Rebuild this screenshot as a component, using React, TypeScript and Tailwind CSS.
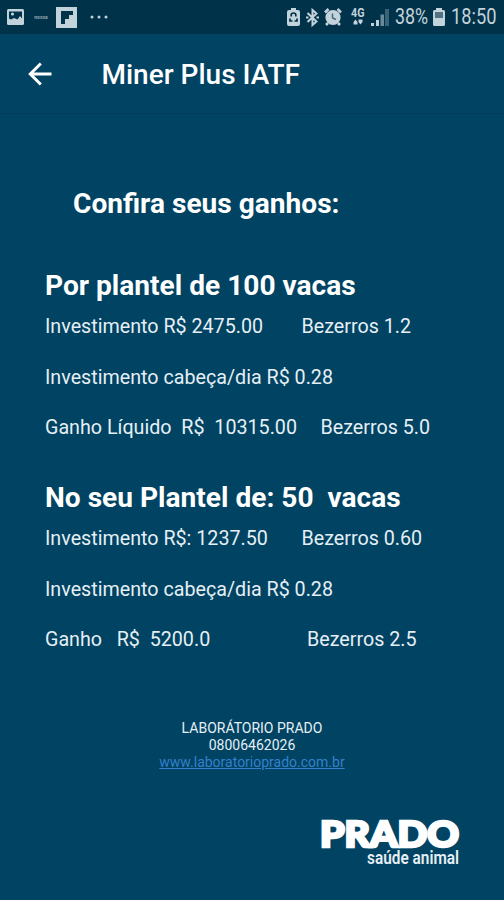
type Row = { left: string; right: string; offset: string };

const rows100: Row[] = [
  { left: "Investimento R$ 2475.00", right: "Bezerros 1.2", offset: "w-[256.5px]" },
  { left: "Investimento cabeça/dia R$ 0.28", right: "", offset: "w-[300px]" },
  { left: "Ganho Líquido  R$  10315.00", right: "Bezerros 5.0", offset: "w-[275.5px]" },
];

const rows50: Row[] = [
  { left: "Investimento R$: 1237.50", right: "Bezerros 0.60", offset: "w-[256.5px]" },
  { left: "Investimento cabeça/dia R$ 0.28", right: "", offset: "w-[300px]" },
  { left: "Ganho   R$  5200.0", right: "Bezerros 2.5", offset: "w-[262px]" },
];

const Rows = ({ rows }: { rows: Row[] }) => (
  <div className="flex flex-col gap-[26.5px] text-[19.7px] leading-6 text-[#e6eff5]">
    {rows.map((row, index) => (
      <div key={index} className="flex whitespace-pre">
        <span className={`shrink-0 ${row.offset}`}>{row.left}</span>
        <span>{row.right}</span>
      </div>
    ))}
  </div>
);

const StatusBar = () => (
  <div className="flex h-[34px] items-center justify-between bg-[#003249] text-[#c3d3db]">
    <div className="flex items-center pl-[7px]">
      <svg width="17" height="16" viewBox="0 0 17 16">
        <rect width="17" height="16" rx="1.5" fill="currentColor" />
        <path d="M2 2.5h13v7l-2-2.5-2.5 3.5-3.5-1.5-3 1.5-2-1z" fill="#003249" />
        <circle cx="5.5" cy="5" r="1.6" fill="currentColor" />
      </svg>
      <span className="ml-[9px] w-4 text-center text-[5px] font-bold leading-4 text-[#8fa5b0]">nossa</span>
      <svg className="ml-[7px]" width="21" height="21" viewBox="0 0 21 21">
        <rect width="21" height="21" fill="currentColor" />
        <path d="M5 4h12v4h-4v4H9v5H5z" fill="#003249" />
      </svg>
      <svg className="ml-[13px]" width="18" height="4" viewBox="0 0 18 4" fill="currentColor">
        <circle cx="2" cy="2" r="1.5" />
        <circle cx="9" cy="2" r="1.5" />
        <circle cx="16" cy="2" r="1.5" />
      </svg>
    </div>
    <div className="flex items-center">
      <svg width="13" height="18" viewBox="0 0 13 18">
        <path d="M4 0h5v2h2q2 0 2 2v12q0 2-2 2H2q-2 0-2-2V4q0-2 2-2h2z" fill="currentColor" />
        <path
          d="M4.2 8.5V7q0-2 2.3-2t2.3 2v1.5M3 10.5V13h2.5M10 10.5V13H7.5"
          fill="none"
          stroke="#003249"
          strokeWidth="1.7"
        />
      </svg>
      <svg className="ml-[6px]" width="13" height="19" viewBox="0 0 13 19" fill="none" stroke="currentColor" strokeWidth="2">
        <path d="M1.5 5 10.5 13.5 6.5 17V2l4 3.5L1.5 14" />
        <path d="M0 9.5h2.5M10.5 9.5H13" />
      </svg>
      <svg className="ml-[5px]" width="18" height="18" viewBox="0 0 18 18">
        <circle cx="9" cy="9.5" r="7.6" fill="currentColor" />
        <path d="M1 4.5 4.5 1M17 4.5 13.5 1M4 15l-2 2M14 15l2 2" stroke="currentColor" strokeWidth="2.6" />
        <path d="M8.5 5.5V10l3.5 1.5" fill="none" stroke="#47697a" strokeWidth="1.5" />
      </svg>
      <svg className="ml-[9px] overflow-visible" width="14" height="18" viewBox="0 0 14 18" fill="currentColor">
        <text x="0" y="9" fontSize="12" fontWeight="700" textLength="13.5" lengthAdjust="spacingAndGlyphs">
          4G
        </text>
        <path d="M2.5 14 4.5 11.5 6.5 14v2.5h-4zM7.5 14v-2.5h4V14l-2 2.5z" />
      </svg>
      <svg className="ml-[6px]" width="18" height="18" viewBox="0 0 18 18" fill="currentColor">
        <path d="M0 15h3v3H0zM5 12h3v6H5z" />
        <path d="M9.5 6.5H13V18H9.5z" opacity=".55" />
        <path d="M14 1h4v17h-4z" opacity=".3" />
      </svg>
      <div className="ml-[6px] w-[34px]">
        <span className="inline-block origin-left scale-x-[.83] text-[21.5px] leading-[36px]">38%</span>
      </div>
      <svg className="ml-[4px]" width="12" height="18" viewBox="0 0 12 18">
        <path
          d="M3 0h6v2h1.5Q12 2 12 3.5v13q0 1.5-1.5 1.5h-9Q0 18 0 16.5v-13Q0 2 1.5 2H3z"
          fill="currentColor"
        />
        <path d="M2 4h8v6H2z" fill="#537384" />
      </svg>
      <div className="ml-[6px] w-[53px]">
        <span className="inline-block origin-left scale-x-[.85] text-[21.5px] leading-[36px]">18:50</span>
      </div>
    </div>
  </div>
);

const AppBar = () => (
  <header className="flex h-[80px] items-center border-b border-[#003c5a] bg-[#004362] pl-7 text-white">
    <svg width="24" height="24" viewBox="0 0 24 24" fill="none" stroke="currentColor" strokeWidth="3">
      <path d="M23.5 12h-21M12.8 1.5 2.3 12l10.5 10.5" />
    </svg>
    <h1 className="ml-[49.5px] pt-0.5 text-[28px] font-medium leading-8">Miner Plus IATF</h1>
  </header>
);

const Logo = () => (
  <svg
    className="ml-[320px] mt-[46px] overflow-visible"
    width="142"
    height="52"
    viewBox="0 0 142 52"
    fill="#fff"
  >
    <text
      x="0"
      y="29.5"
      fontSize="35.5"
      fontWeight="900"
      fontFamily="Lato, sans-serif"
      textLength="139"
      lengthAdjust="spacingAndGlyphs"
      stroke="#fff"
      strokeWidth="2.6"
    >
      PRADO
    </text>
    <text x="47" y="47" fontSize="18" fontWeight="600" fill="#e6eff5" textLength="92" lengthAdjust="spacingAndGlyphs">
      saúde animal
    </text>
  </svg>
);

export default function App() {
  return (
    <div className="flex h-[900px] w-[504px] flex-col overflow-hidden bg-[#004362] font-['Roboto',sans-serif]">
      <StatusBar />
      <AppBar />
      <main className="flex flex-1 flex-col pl-[45px] text-white">
        <h2 className="mt-[74px] pl-7 text-[28.1px] font-bold leading-8">Confira seus ganhos:</h2>
        <h3 className="mt-[50px] text-[28.1px] font-bold leading-8">Por plantel de 100 vacas</h3>
        <div className="mt-[13px]">
          <Rows rows={rows100} />
        </div>
        <h3 className="mt-[42px] whitespace-pre text-[28.1px] font-bold leading-8">No seu Plantel de: 50  vacas</h3>
        <div className="mt-[13px]">
          <Rows rows={rows50} />
        </div>
      </main>
      <footer className="flex h-[180px] flex-col">
        <div className="flex flex-col items-center text-[14px] leading-[17px] text-[#e6eff5]">
          <span>LABORÁTORIO PRADO</span>
          <span>08006462026</span>
          <a className="text-[#3580cc] underline">www.laboratorioprado.com.br</a>
        </div>
        <Logo />
      </footer>
    </div>
  );
}
